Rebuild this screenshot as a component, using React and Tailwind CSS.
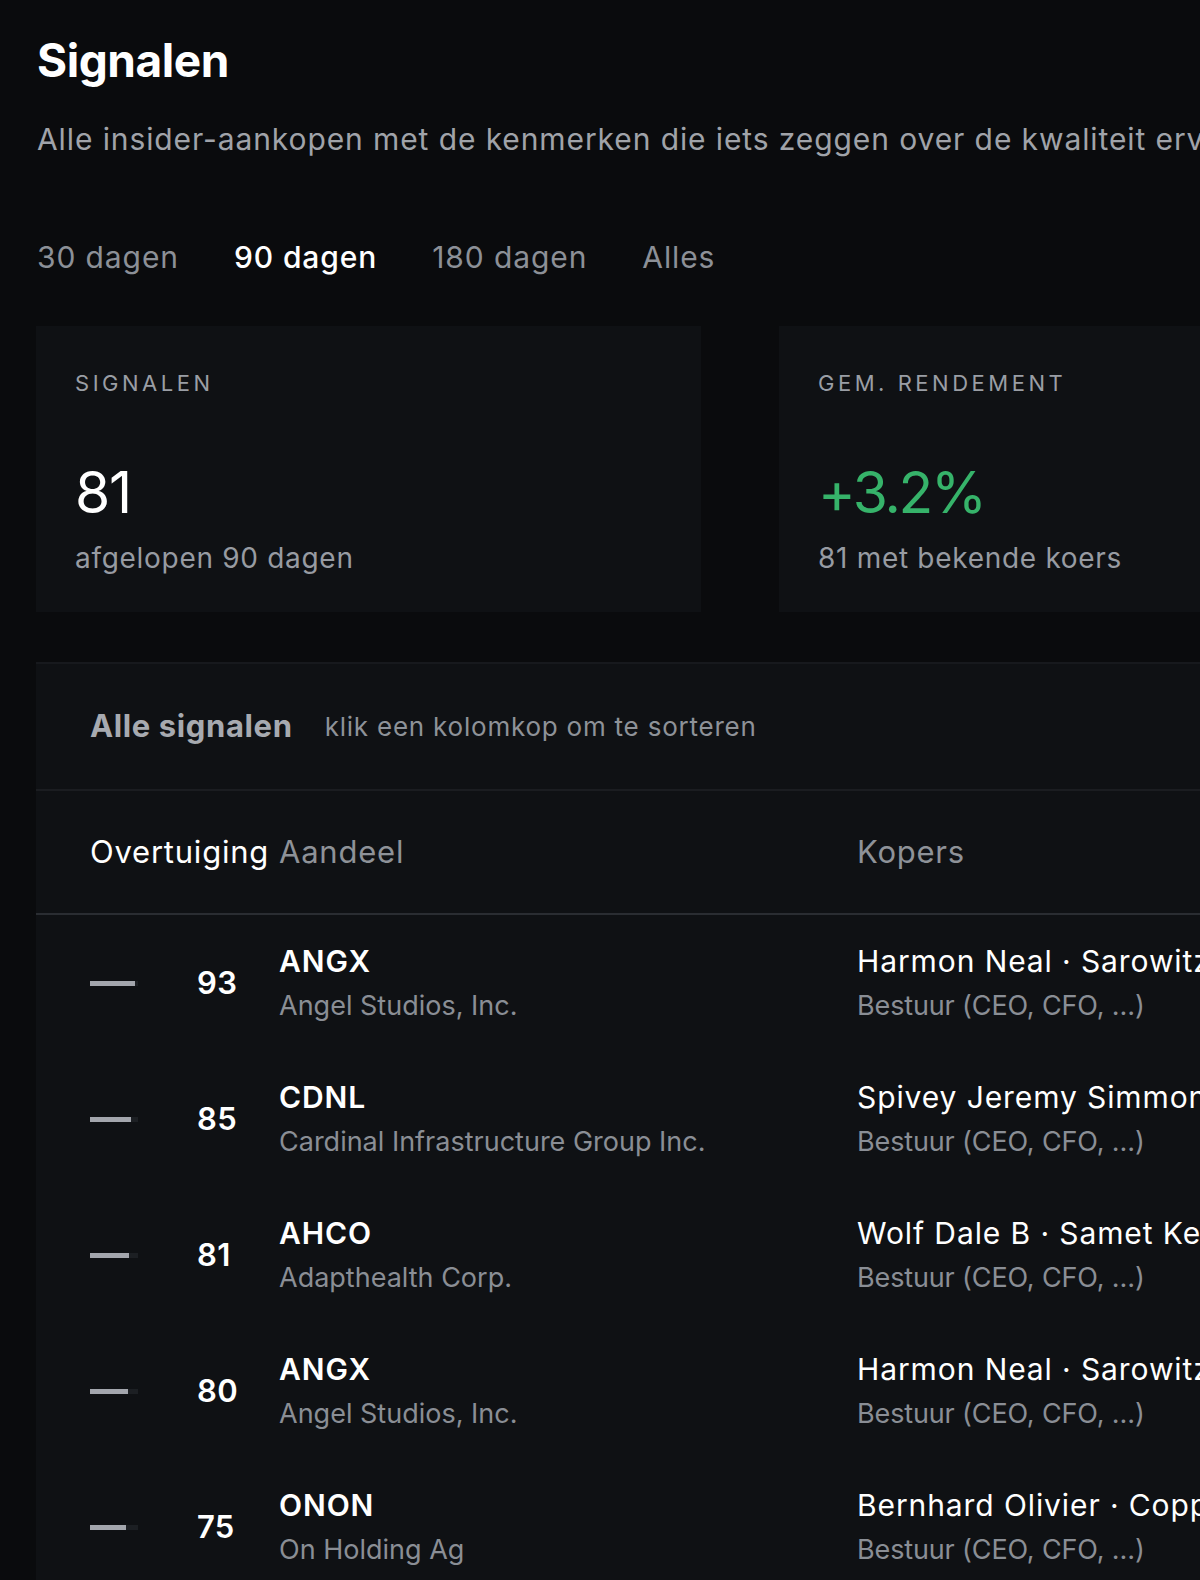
import React from "react";

const rows = [
  { score: 93, ticker: "ANGX", name: "Angel Studios, Inc.", buyers: "Harmon Neal · Sarowitz Scott", role: "Bestuur (CEO, CFO, …)" },
  { score: 85, ticker: "CDNL", name: "Cardinal Infrastructure Group Inc.", buyers: "Spivey Jeremy Simmons Daniel", role: "Bestuur (CEO, CFO, …)" },
  { score: 81, ticker: "AHCO", name: "Adapthealth Corp.", buyers: "Wolf Dale B · Samet Kenneth", role: "Bestuur (CEO, CFO, …)" },
  { score: 80, ticker: "ANGX", name: "Angel Studios, Inc.", buyers: "Harmon Neal · Sarowitz Scott", role: "Bestuur (CEO, CFO, …)" },
  { score: 75, ticker: "ONON", name: "On Holding Ag", buyers: "Bernhard Olivier · Coppens Marc", role: "Bestuur (CEO, CFO, …)" },
];

export default function App() {
  return (
    <div
      className="w-[1200px] h-[1580px] overflow-hidden bg-[#0a0b0d] text-[#f4f5f6]"
      style={{ fontFamily: "Inter, 'Noto Sans', sans-serif" }}
    >
      <div className="w-[1600px] pl-[37px] pt-[34px]">
        <h1 className="text-[46px] leading-[52px] font-bold tracking-[-0.01em] text-white">Signalen</h1>
        <p className="mt-[33px] text-[30px] leading-[40px] tracking-[0.03em] text-[#a0a3a9] whitespace-nowrap">
          Alle insider-aankopen met de kenmerken die iets zeggen over de kwaliteit ervan: wie koopt, hoeveel en wanneer.
        </p>

        <div className="mt-[78px] flex gap-[55px] text-[30px] leading-[40px] tracking-[0.03em]">
          <span className="text-[#8c9097]">30 dagen</span>
          <span className="text-white font-medium">90 dagen</span>
          <span className="text-[#8c9097]">180 dagen</span>
          <span className="text-[#8c9097]">Alles</span>
        </div>

        <div className="mt-[49px] ml-[-1px] flex gap-[78px]">
          <div className="w-[665px] h-[286px] bg-[#0f1114] px-[39px] pt-[42px]">
            <div className="text-[22px] leading-[30px] tracking-[0.16em] text-[#9a9ea5]">SIGNALEN</div>
            <div className="mt-[63px] text-[57px] leading-[64px] tracking-[-0.02em] text-white">81</div>
            <div className="mt-[15px] text-[28px] leading-[36px] tracking-[0.025em] text-[#979ba2]">afgelopen 90 dagen</div>
          </div>
          <div className="w-[665px] h-[286px] bg-[#0f1114] px-[39px] pt-[42px]">
            <div className="text-[22px] leading-[30px] tracking-[0.16em] text-[#9a9ea5]">GEM. RENDEMENT</div>
            <div className="mt-[63px] text-[57px] leading-[64px] tracking-[-0.04em] text-[#36b36a]">+3.2%</div>
            <div className="mt-[15px] text-[28px] leading-[36px] tracking-[0.025em] text-[#979ba2]">81 met bekende koers</div>
          </div>
        </div>

        <div className="mt-[50px] ml-[-1px] w-[1500px] bg-[#0f1114] border-t-2 border-[#17191d]">
          <div className="h-[127px] flex items-center gap-[32px] pl-[54px] border-b-2 border-[#1b1d21]">
            <span className="text-[31px] font-bold tracking-[0.02em] text-[#a7aab0]">Alle signalen</span>
            <span className="text-[26px] tracking-[0.03em] text-[#8e9298]">klik een kolomkop om te sorteren</span>
          </div>
          <div className="h-[124px] grid grid-cols-[189px_578px_1fr] items-center pl-[54px] border-b-2 border-[#2a2d32] text-[31px] tracking-[0.025em]">
            <span className="text-white">Overtuiging</span>
            <span className="text-[#8e9298]">Aandeel</span>
            <span className="text-[#8e9298]">Kopers</span>
          </div>
          {rows.map((r, i) => (
            <div key={i} className="h-[136px] grid grid-cols-[189px_578px_1fr] items-center pl-[54px]">
              <div className="flex items-center">
                <div className="w-[48px] h-[5px] bg-[#1c1f23]">
                  <div className="h-full bg-[#a3a6ad]" style={{ width: `${r.score}%` }} />
                </div>
                <span className="ml-[59px] text-[31px] font-semibold tracking-[0.01em] text-white">{r.score}</span>
              </div>
              <div className="flex flex-col">
                <span className="text-[30px] leading-[40px] font-semibold tracking-[0.03em] text-white">{r.ticker}</span>
                <span className="mt-[5px] text-[27px] leading-[40px] text-[#8a8e95] whitespace-nowrap">{r.name}</span>
              </div>
              <div className="flex flex-col">
                <span className="text-[30px] leading-[40px] tracking-[0.03em] text-white whitespace-nowrap">{r.buyers}</span>
                <span className="mt-[5px] text-[27px] leading-[40px] tracking-[-0.005em] text-[#8a8e95] whitespace-nowrap">{r.role}</span>
              </div>
            </div>
          ))}
        </div>
      </div>
    </div>
  );
}
